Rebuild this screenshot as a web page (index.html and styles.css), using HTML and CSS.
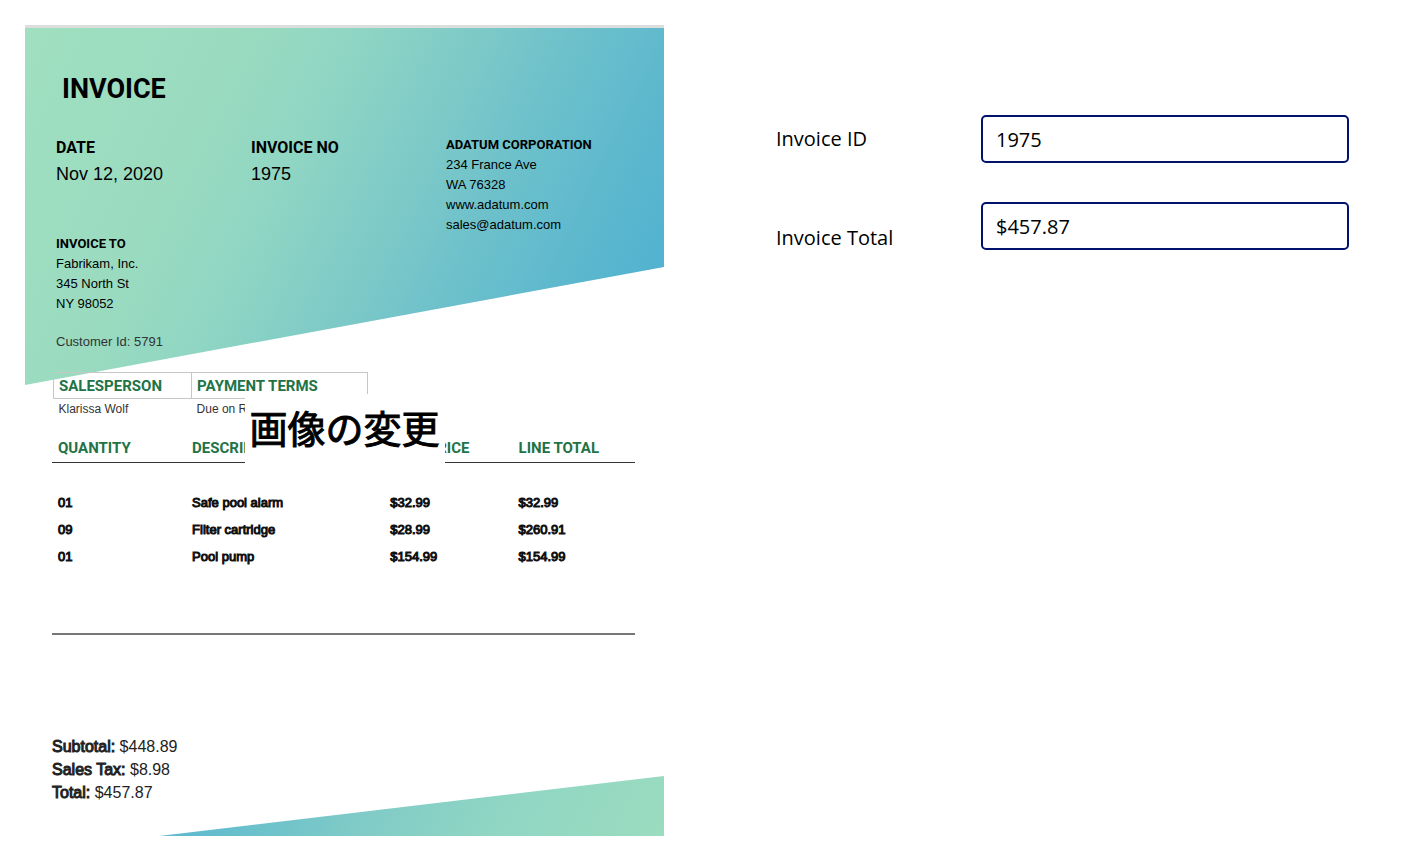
FILE: index.html
```
<!DOCTYPE html>
<html lang="ja">
<head>
<meta charset="utf-8">
<title>Invoice</title>
<link rel="stylesheet" href="styles.css">
</head>
<body>
<main class="screen">
  <article class="sheet" lang="en">
    <h1 class="title">INVOICE</h1>
    <div class="meta">
      <section class="meta-item">
        <h2 class="meta-label">DATE</h2>
        <p class="meta-value">Nov 12, 2020</p>
      </section>
      <section class="meta-item">
        <h2 class="meta-label">INVOICE NO</h2>
        <p class="meta-value">1975</p>
      </section>
      <address class="party">
        <strong class="party-name">ADATUM CORPORATION</strong>
        <span>234 France Ave</span>
        <span>WA 76328</span>
        <span>www.adatum.com</span>
        <span>sales@adatum.com</span>
      </address>
    </div>
    <address class="party party-to">
      <strong class="party-name">INVOICE TO</strong>
      <span>Fabrikam, Inc.</span>
      <span>345 North St</span>
      <span>NY 98052</span>
      <span class="customer">Customer Id: 5791</span>
    </address>

    <table class="terms">
      <thead><tr><th class="col-sales">SALESPERSON</th><th>PAYMENT TERMS</th></tr></thead>
      <tbody><tr><td>Klarissa Wolf</td><td>Due on Receipt</td></tr></tbody>
    </table>

    <table class="items">
      <thead>
        <tr><th class="col-qty">QUANTITY</th><th class="col-desc">DESCRIPTION</th><th class="col-price">UNIT PRICE</th><th>LINE TOTAL</th></tr>
      </thead>
      <tbody>
        <tr><td>01</td><td>Safe pool alarm</td><td>$32.99</td><td>$32.99</td></tr>
        <tr><td>09</td><td>Filter cartridge</td><td>$28.99</td><td>$260.91</td></tr>
        <tr><td>01</td><td>Pool pump</td><td>$154.99</td><td>$154.99</td></tr>
      </tbody>
    </table>

    <div class="totals">
      <p><span class="heavy">Subtotal:</span> $448.89</p>
      <p><span class="heavy">Sales Tax:</span> $8.98</p>
      <p><span class="heavy">Total:</span> $457.87</p>
    </div>

    <button class="change-image" type="button" lang="ja">画像の変更</button>
  </article>

  <form class="fields">
    <label class="field-label" for="invoice-id">Invoice ID</label>
    <input class="field-input" id="invoice-id" type="text" value="1975">
    <label class="field-label field-label-low" for="invoice-total">Invoice Total</label>
    <input class="field-input" id="invoice-total" type="text" value="$457.87">
  </form>
</main>
</body>
</html>
```

FILE: styles.css
```
* {
  box-sizing: border-box;
}

body {
  margin: 0;
  background: #fff;
  color: #000;
  font-family: "Liberation Sans", Arial, sans-serif;
}

h1, h2, p {
  margin: 0;
}

.screen {
  display: grid;
  grid-template-columns: minmax(0, 639fr) minmax(0, 573fr);
  column-gap: 112px;
  align-items: start;
  padding: 25px 78px 7px 25px;
}

/* Invoice page */
.sheet {
  position: relative;
  z-index: 0;
  padding: 45px 29px 32px 27px;
  border-top: 3px solid #dcdedd;
}

.sheet::before,
.sheet::after {
  content: "";
  position: absolute;
  z-index: -1;
  right: 0;
}

.sheet::before {
  top: 0;
  left: 0;
  height: 357px;
  background: linear-gradient(116deg, #a0e0c0 0%, #9adbc0 27%, #90d6c3 40%, #80cbc7 54%, #6cc0cb 69%, #5bb7ce 83%, #50b1d0 95%);
  clip-path: polygon(0 0, 100% 0, 100% 239px, 0 100%);
}

.sheet::after {
  bottom: 0;
  left: 21%;
  height: 60px;
  background: linear-gradient(118deg, #58b6cf 0%, #68bfcc 20%, #80cbc7 42%, #90d6c3 68%, #9bdcc0 100%);
  clip-path: polygon(0 100%, 100% 0, 100% 100%);
}

.title {
  padding-left: 10px;
  font: 700 27px/32px Roboto, sans-serif;
}

.meta {
  display: grid;
  grid-template-columns: repeat(3, minmax(0, 1fr));
  margin: 30px -6px 0 4px;
}

.meta-label {
  font: 700 16px/26px Roboto, sans-serif;
}

.meta-value {
  font-size: 18px;
  line-height: 26px;
}

.party {
  display: flex;
  flex-direction: column;
  font-size: 13px;
  font-style: normal;
  line-height: 20px;
}

.party-to {
  margin: -1px 0 0 4px;
}

.party-name {
  font-family: Roboto, sans-serif;
  font-weight: 700;
}

.customer {
  margin-top: 18px;
  color: #333;
}

.terms,
.items {
  border-collapse: collapse;
  table-layout: fixed;
  text-align: left;
}

.terms th,
.items th {
  color: #217346;
  font: 700 15px/20px Roboto, sans-serif;
  white-space: nowrap;
}

.terms {
  width: 54%;
  margin: 20px 0 0 1px;
}

.terms th {
  height: 26px;
  padding: 0 5px;
  border: 1px solid #c4c8c6;
}

.terms td {
  height: 20px;
  padding: 0 5px;
  color: #333;
  font-size: 12px;
}

.col-sales {
  width: 44%;
}

.items {
  width: 100%;
  margin-top: 19px;
  border-bottom: 2px solid #777;
}

.items th {
  height: 24px;
  padding: 0 6px 4px;
  border-bottom: 1px solid #333;
}

.items td {
  height: 27px;
  padding: 0 6px;
  font-size: 13px;
  -webkit-text-stroke: 1px #111;
}

.items tbody::before,
.items tbody::after {
  content: "";
  display: table-row;
  height: 27px;
}

.items tbody::after {
  height: 64px;
}

.col-qty {
  width: 23%;
}

.col-desc {
  width: 34%;
}

.col-price {
  width: 22%;
}

.totals {
  margin-top: 100px;
  color: #222;
  font-size: 16px;
  line-height: 23px;
}

.heavy {
  -webkit-text-stroke: 1px #222;
}

/* Button shown over the picture */
.change-image {
  position: absolute;
  top: 366px;
  left: 50%;
  transform: translateX(-50%);
  padding: 0 5px 6px;
  border: 0;
  background: #fff;
  color: #000;
  font: 400 38px/66px "Noto Sans CJK JP", sans-serif;
  -webkit-text-stroke: 1px #000;
  white-space: nowrap;
}

/* Extracted values */
.fields {
  display: grid;
  grid-template-columns: minmax(0, 205fr) minmax(0, 368fr);
  row-gap: 39px;
  align-items: center;
  padding-top: 90px;
  font-family: "Open Sans", sans-serif;
  font-size: 20px;
  line-height: 24px;
}

.field-label-low {
  align-self: end;
}

.field-input {
  width: 100%;
  height: 48px;
  padding: 0 13px;
  border: 2px solid #00126b;
  border-radius: 5px;
  background: #fff;
  color: #000;
  font: inherit;
}
```
